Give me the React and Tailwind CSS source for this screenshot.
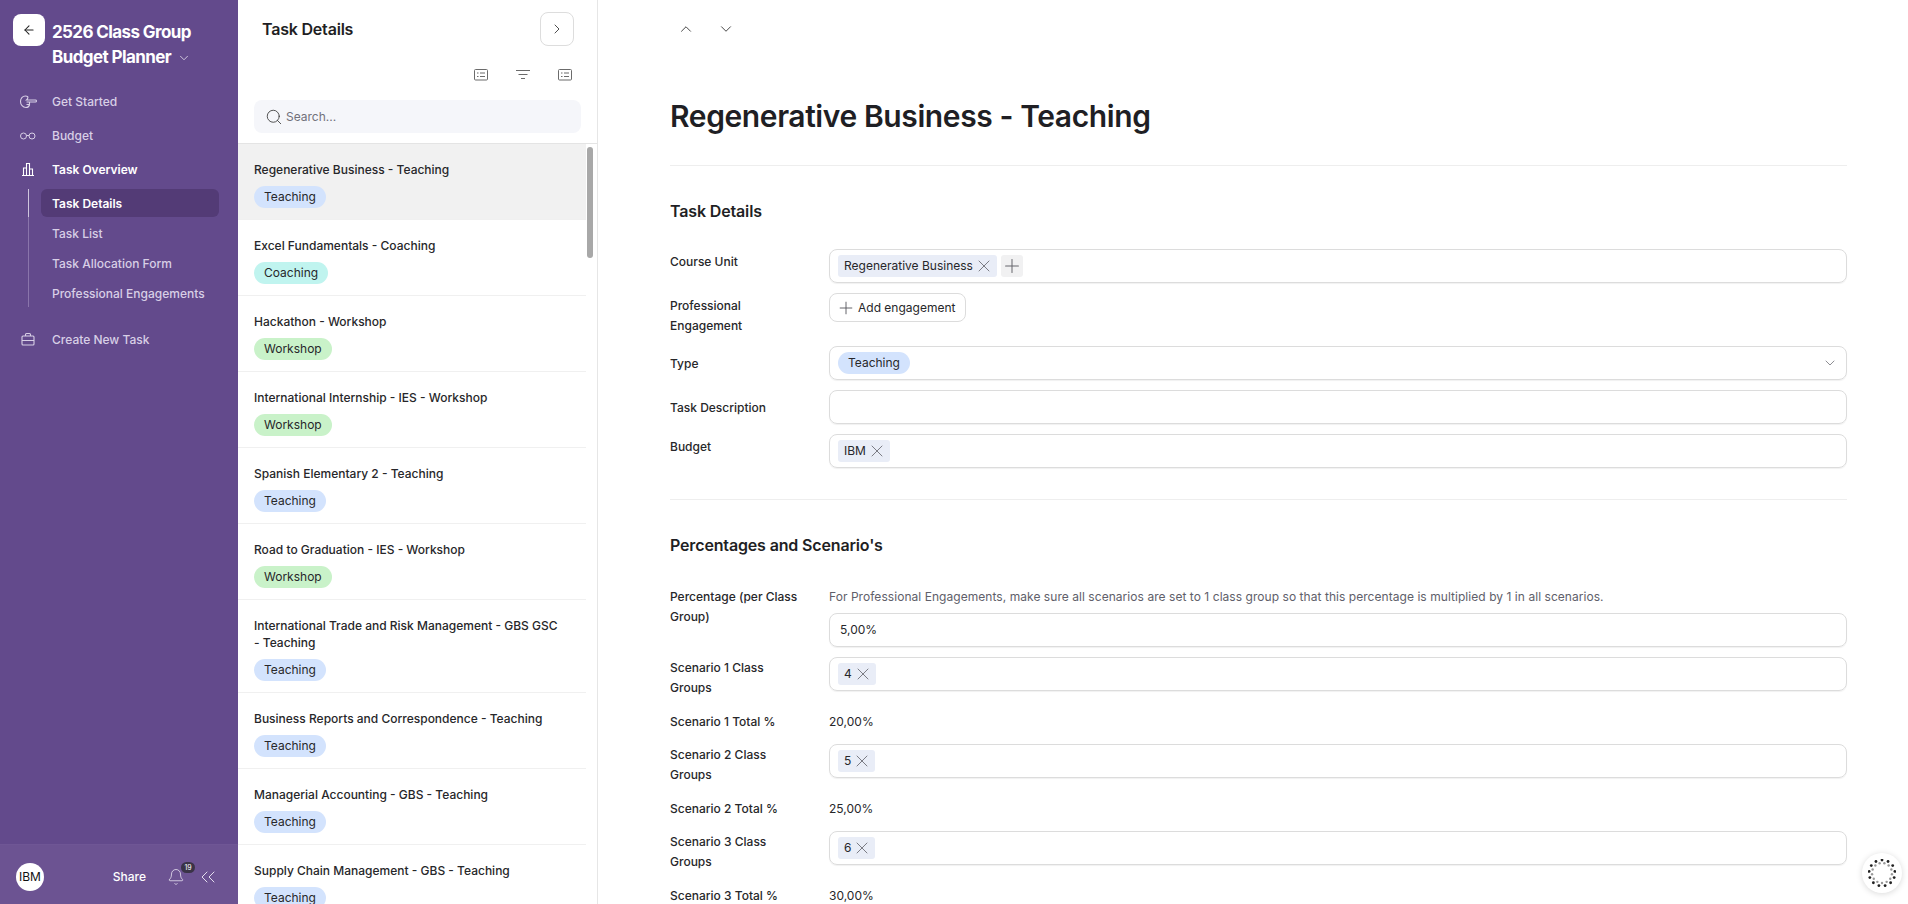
import React from "react";
import { ArrowLeft, ChevronDown, ChevronRight, ChevronUp, ChevronsLeft, Bell, Plus, Search, X } from "lucide-react";

const badgeColors = {
  Teaching: "bg-[#d3e3fd]",
  Coaching: "bg-[#c0f4ef]",
  Workshop: "bg-[#c9f2c9]",
};

const tasks = [
  ["Regenerative Business - Teaching", "Teaching"],
  ["Excel Fundamentals - Coaching", "Coaching"],
  ["Hackathon - Workshop", "Workshop"],
  ["International Internship - IES - Workshop", "Workshop"],
  ["Spanish Elementary 2 - Teaching", "Teaching"],
  ["Road to Graduation - IES - Workshop", "Workshop"],
  ["International Trade and Risk Management - GBS GSC - Teaching", "Teaching"],
  ["Business Reports and Correspondence - Teaching", "Teaching"],
  ["Managerial Accounting - GBS - Teaching", "Teaching"],
  ["Supply Chain Management - GBS - Teaching", "Teaching"],
];

const HandIcon = () => (
  <svg width="18" height="18" viewBox="0 0 18 18" fill="none" stroke="currentColor" strokeWidth="1.1">
    <path d="M9 3.800C8.200 3.300 7.200 3 6.500 3 3.400 3 1.500 5.600 1.500 8.500 1.500 11.800 3.800 14.500 7 14.500 8.800 14.500 10 13.500 10.500 12V9" />
    <path d="M9 3.800C9 5 8.500 6.200 7.500 7h9c1.300 0 1.300 2 0 2h-9" />
    <path d="M7.500 11.500h3" />
  </svg>
);

const GlassesIcon = () => (
  <svg width="18" height="18" viewBox="0 0 18 18" fill="none" stroke="currentColor" strokeWidth="1">
    <circle cx="4.500" cy="9" r="3" />
    <circle cx="13" cy="9" r="3" />
    <path d="M7.500 8.500h2.500" />
  </svg>
);

const BarsIcon = () => (
  <svg width="18" height="18" viewBox="0 0 18 18" fill="none" stroke="#fff" strokeWidth="1.1">
    <path d="M3 14.500h12M4.500 14.500V7h3v7.500M7.500 14.500V2.500h3v12M10.500 14.500V8h3v6.500" />
  </svg>
);

const CaseIcon = () => (
  <svg width="18" height="18" viewBox="0 0 18 18" fill="none" stroke="currentColor" strokeWidth="1.1">
    <rect x="3" y="5" width="12" height="9" rx="1" />
    <path d="M6.500 5V3.500c0-.5.400-1 1-1h3c.6 0 1 .5 1 1V5M3 9.500h12" />
  </svg>
);

const ListBoxIcon = () => (
  <svg width="16" height="16" viewBox="0 0 16 16" fill="none" stroke="#6b6b6b" strokeWidth="1">
    <rect x="1.500" y="2.500" width="13" height="10.500" rx="1" />
    <path d="M4 6h1.500M4 9.500h1.500M7 6h5M7 9.500h5" />
  </svg>
);

const FilterIcon = () => (
  <svg width="16" height="16" viewBox="0 0 16 16" fill="none" stroke="#6b6b6b" strokeWidth="1">
    <path d="M1 3.500h14M3.500 7.500h9M6 11.500h4" />
  </svg>
);

const Spinner = () => {
  const outer = Array.from({ length: 13 }, (_, i) => (i / 13) * Math.PI * 2);
  const inner = Array.from({ length: 13 }, (_, i) => ((i + 0.5) / 13) * Math.PI * 2);
  return (
    <svg width="28" height="28" viewBox="0 0 28 28">
      {outer.map((a, i) => (
        <circle key={i} cx={14 + Math.sin(a) * 13} cy={14 - Math.cos(a) * 13} r="1.400" fill="#222" />
      ))}
      {inner.map((a, i) => (
        <circle key={i} cx={14 + Math.sin(a) * 10} cy={14 - Math.cos(a) * 10} r="1.200" fill="#999" />
      ))}
    </svg>
  );
};

const NavItem = ({ icon, label, active, className }) => (
  <div className={`flex items-center h-[34px] pl-[19px] ${className || ""}`}>
    <span className="w-[33px] text-[#d8cfe6] flex">{icon}</span>
    <span className={`text-[12px] ${active ? "font-semibold text-white" : "font-medium text-[#d8cfe6]"}`}>{label}</span>
  </div>
);

const Sidebar = () => (
  <aside className="w-[238px] shrink-0 bg-[#634a8c] flex flex-col h-full">
    <div className="flex-1">
      <div className="flex pt-[14px] pl-[13px]">
        <button className="w-[32px] h-[32px] rounded-[8px] bg-white flex items-center justify-center text-[#222]">
          <ArrowLeft size={14} strokeWidth={1.8} />
        </button>
        <div className="ml-[7px] text-white text-[17px] font-bold leading-[25px] tracking-[-0.6px] pt-[6px]">
          <div>2526 Class Group</div>
          <div className="flex items-center gap-[6px]">
            Budget Planner
            <ChevronDown size={14} strokeWidth={1.3} className="text-[#f0ecf5]" />
          </div>
        </div>
      </div>
      <div className="mt-[15px]">
        <NavItem icon={<HandIcon />} label="Get Started" />
        <NavItem icon={<GlassesIcon />} label="Budget" />
        <NavItem icon={<BarsIcon />} label="Task Overview" active />
      </div>
      <div className="relative ml-[41px] w-[178px] mt-[2px]">
        <div className="absolute left-[-13px] top-0 h-[118px] w-px bg-[#8a75ab]" />
        <div className="absolute left-[-13px] top-0 h-[28px] w-px bg-[#cfc6de]" />
        <div className="h-[28px] rounded-[6px] bg-[#533b76] flex items-center pl-[11px] pt-[1px] text-[12px] font-semibold text-white">
          Task Details
        </div>
        <div className="h-[30px] flex items-center pl-[11px] text-[12px] font-medium text-[#d8cfe6] mt-[2px]">Task List</div>
        <div className="h-[30px] flex items-center pl-[11px] text-[12px] font-medium text-[#d8cfe6]">Task Allocation Form</div>
        <div className="h-[30px] flex items-center pl-[11px] text-[12px] font-medium text-[#d8cfe6]">Professional Engagements</div>
      </div>
      <NavItem icon={<CaseIcon />} label="Create New Task" className="mt-[14px]" />
    </div>
    <div className="h-[60px] bg-[#6c5392] border-t border-[#6f5695] flex items-center pt-[4px] pl-[16px] pr-[18px]">
      <div className="w-[28px] h-[28px] rounded-full bg-white flex items-center justify-center text-[12px] text-[#111]">IBM</div>
      <span className="ml-auto text-[12px] font-medium text-white">Share</span>
      <div className="relative ml-[21px] text-[#e4deee] flex">
        <Bell size={18} strokeWidth={1.1} />
        <span className="absolute left-[14px] top-[-6px] w-[14px] h-[11px] rounded-full bg-[#3a3347] text-[7px] leading-[11px] text-center text-white">19</span>
      </div>
      <ChevronsLeft size={24} strokeWidth={1} className="ml-[11px] text-[#e4deee]" />
    </div>
  </aside>
);

const TaskList = () => (
  <section className="w-[360px] shrink-0 border-r border-[#e6e6e6] flex flex-col h-full relative">
    <div className="flex items-center justify-between pl-[24px] pr-[23px] pt-[12px]">
      <h2 className="text-[16px] font-semibold text-[#1f1f24] tracking-[-0.2px]">Task Details</h2>
      <button className="w-[34px] h-[34px] rounded-[8px] border border-[#ddd] flex items-center justify-center text-[#333]">
        <ChevronRight size={16} strokeWidth={1.3} />
      </button>
    </div>
    <div className="flex justify-end gap-[26px] pr-[24px] mt-[21px]">
      <ListBoxIcon />
      <FilterIcon />
      <ListBoxIcon />
    </div>
    <div className="ml-[16px] mt-[17px] h-[34px] w-[327px] rounded-[8px] bg-[#f5f6fa] flex items-center pl-[11px] gap-[3px]">
      <Search size={18} strokeWidth={1.1} className="text-[#333]" />
      <span className="text-[12px] text-[#71717a]">Search...</span>
    </div>
    <div className="mt-[10px] border-t border-[#e4e4e4] w-[359px] overflow-hidden">
      {tasks.map(([title, type], i) => (
        <div key={i} className={`w-[348px] pt-[17px] pb-[11px] pl-[16px] pr-[20px] border-b border-[#f0f0f0] ${i === 0 ? "bg-[#f1f1f1]" : ""}`}>
          <div className="text-[12px] font-medium leading-[17px] text-[#27272a]">{title}</div>
          <div className={`mt-[8px] h-[22px] inline-flex items-center rounded-full px-[10px] text-[12px] text-[#27272a] align-top ${badgeColors[type]}`}>{type}</div>
        </div>
      ))}
    </div>
    <div className="absolute left-[349px] top-[147px] w-[6px] h-[111px] rounded-full bg-[#a8a8a8]" />
  </section>
);

const Chip = ({ children }) => (
  <span className="h-[22px] inline-flex items-center gap-[1px] rounded-[3px] bg-[#e9edf7] pl-[6px] pr-[3px] text-[12px] text-[#27272a]">
    {children}
    <X size={20} strokeWidth={0.9} className="text-[#55555c]" />
  </span>
);

const Box = ({ children }) => (
  <div className="flex-1 h-[34px] flex items-center gap-[4px] rounded-[8px] border border-[#dcdcdc] shadow-[0_1px_1px_rgba(0,0,0,0.06)] pl-[8px] pr-[8px] text-[12px] text-[#27272a]">
    {children}
  </div>
);

const Field = ({ label, children, pt = "pt-[1px]" }) => (
  <div className="flex">
    <div className="w-[159px] shrink-0">
      <div className={`w-[130px] text-[12px] font-medium leading-[20px] text-[#27272a] ${pt}`}>{label}</div>
    </div>
    {children}
  </div>
);

const TotalRow = ({ label, value }) => (
  <div className="flex h-[26px] pt-[4px] text-[12px] leading-[20px] text-[#27272a]">
    <div className="w-[159px] shrink-0 font-medium">{label}</div>
    <div>{value}</div>
  </div>
);

const Heading = ({ children }) => (
  <h3 className="text-[16px] font-semibold leading-[22px] text-[#1f1f24] tracking-[-0.15px]">{children}</h3>
);

const Details = () => (
  <main className="flex-1 min-w-0 h-full overflow-hidden pl-[72px] pr-[61px]">
    <div className="flex gap-[22px] pl-[7px] pt-[20px] text-[#333]">
      <ChevronUp size={18} strokeWidth={1.2} />
      <ChevronDown size={18} strokeWidth={1.2} />
    </div>
    <h1 className="mt-[60px] text-[30px] font-semibold leading-[36px] tracking-[-0.4px] text-[#1f1f24]">Regenerative Business - Teaching</h1>
    <div className="mt-[31px] border-t border-[#eeeeee]" />
    <div className="mt-[34px]"><Heading>Task Details</Heading></div>
    <div className="mt-[27px] flex flex-col gap-[10px]">
      <Field label="Course Unit" pt="pt-[3px]">
        <Box>
          <Chip>Regenerative Business</Chip>
          <span className="w-[22px] h-[22px] rounded-[3px] bg-[#f1f1f2] flex items-center justify-center text-[#66666c]"><Plus size={22} strokeWidth={1.1} /></span>
        </Box>
      </Field>
      <Field label="Professional Engagement" pt="pt-[3px]">
        <button className="h-[29px] w-[137px] mb-[14px] rounded-[8px] border border-[#dcdcdc] flex items-center pl-[6px] gap-[2px] text-[12px] text-[#27272a]">
          <Plus size={20} strokeWidth={1.1} className="text-[#55555c]" /> Add engagement
        </button>
      </Field>
      <Field label="Type" pt="pt-[8px]">
        <Box>
          <span className="h-[22px] inline-flex items-center rounded-full bg-[#d3e3fd] px-[10px]">Teaching</span>
          <ChevronDown size={16} strokeWidth={1} className="ml-auto text-[#55555c]" />
        </Box>
      </Field>
      <Field label="Task Description" pt="pt-[8px]"><Box /></Field>
      <Field label="Budget" pt="pt-[3px]"><Box><Chip>IBM</Chip></Box></Field>
    </div>
    <div className="mt-[31px] border-t border-[#eeeeee]" />
    <div className="mt-[34px]"><Heading>Percentages and Scenario's</Heading></div>
    <div className="mt-[31px] flex flex-col gap-[10px]">
      <Field label="Percentage (per Class Group)" pt="pt-0">
        <div className="flex-1">
          <div className="text-[12px] tracking-[0.05px] text-[#60606a] leading-[20px] h-[26px]">For Professional Engagements, make sure all scenarios are set to 1 class group so that this percentage is multiplied by 1 in all scenarios.</div>
          <div className="flex"><Box><span className="pl-[2px]">5,00%</span></Box></div>
        </div>
      </Field>
      <Field label="Scenario 1 Class Groups"><Box><Chip>4</Chip></Box></Field>
      <TotalRow label="Scenario 1 Total %" value="20,00%" />
      <Field label="Scenario 2 Class Groups"><Box><Chip>5</Chip></Box></Field>
      <TotalRow label="Scenario 2 Total %" value="25,00%" />
      <Field label="Scenario 3 Class Groups"><Box><Chip>6</Chip></Box></Field>
      <TotalRow label="Scenario 3 Total %" value="30,00%" />
    </div>
  </main>
);

export default function App() {
  return (
    <div className="relative flex h-[904px] w-full overflow-hidden bg-white font-['Inter',sans-serif]">
      <Sidebar />
      <TaskList />
      <Details />
      <div className="absolute right-[6px] bottom-[11px] w-[40px] h-[40px] rounded-full bg-white shadow-[0_1px_6px_rgba(0,0,0,0.15)] flex items-center justify-center">
        <Spinner />
      </div>
    </div>
  );
}
